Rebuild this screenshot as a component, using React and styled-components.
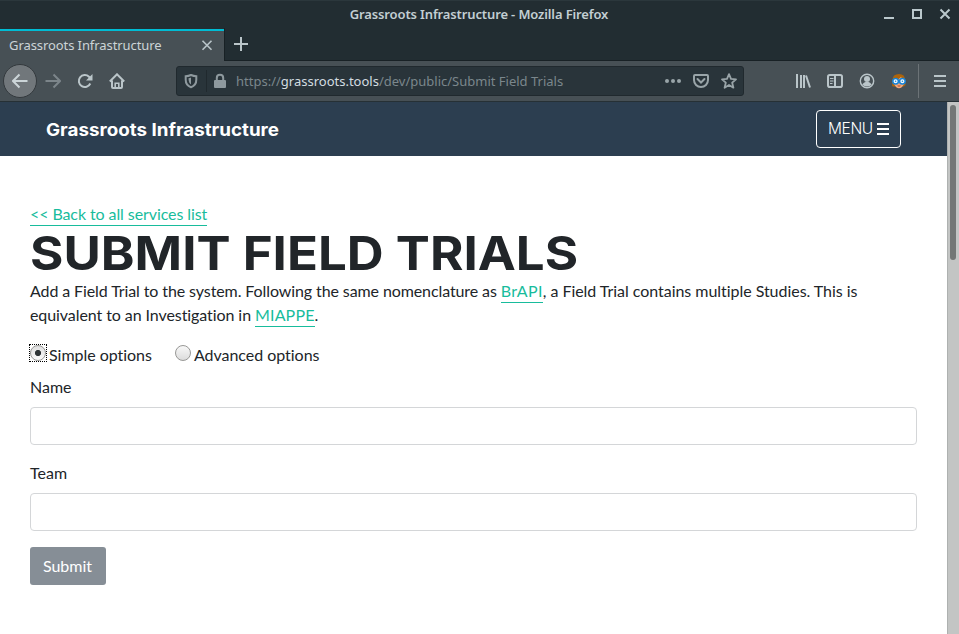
import React from "react";
import styled, { createGlobalStyle } from "styled-components";

const GlobalStyle = createGlobalStyle`
  * { box-sizing: border-box; }
  html, body { margin: 0; padding: 0; overflow: hidden; background: #fff; }
`;

const Window = styled.div`
  width: 959px;
  height: 634px;
  display: flex;
  flex-direction: column;
  overflow: hidden;
  font-family: Lato, sans-serif;
  color: #212529;
`;

const TitleBar = styled.header`
  height: 28px;
  flex: none;
  display: grid;
  grid-template-columns: 1fr auto 1fr;
  align-items: center;
  background: #222d32;
  border-top: 1px solid #2b373c;
  padding-right: 8px;
`;

const WindowTitle = styled.div`
  grid-column: 2;
  padding-left: 7px;
  font: 600 13px/27px "Noto Sans", sans-serif;
  letter-spacing: -0.13px;
  color: #c3cfd3;
  white-space: nowrap;
`;

const WindowButtons = styled.div`
  display: flex;
  justify-content: flex-end;
  gap: 16px;
  margin-top: -1px;
`;

const TabStrip = styled.div`
  height: 33px;
  flex: none;
  display: flex;
  background: #222d32;
`;

const Tab = styled.div`
  width: 224px;
  height: 32px;
  display: flex;
  align-items: center;
  justify-content: space-between;
  padding: 0 11px 0 9px;
  background: #475055;
  border-top: 2px solid #00bcd4;
  margin-top: 1px;
  font: 13px/26px "Noto Sans", sans-serif;
  color: #ccd4d7;
`;

const TabLabel = styled.span`
  height: 30px;
  line-height: 28px;
  letter-spacing: -0.08px;
  white-space: nowrap;
`;

const TabSpace = styled.div`
  flex: 1;
  display: flex;
  align-items: center;
  padding-left: 8px;
  border-left: 1px solid #182125;
  border-bottom: 1px solid #182125;
`;

const Toolbar = styled.nav`
  height: 41px;
  flex: none;
  display: flex;
  align-items: center;
  background: #475055;
  border-bottom: 1px solid #263035;
  padding-left: 3px;
`;

const BackButton = styled.div`
  width: 34px;
  height: 34px;
  flex: none;
  border-radius: 50%;
  background: #71777b;
  border: 1px solid #33393d;
  display: flex;
  align-items: center;
  justify-content: center;
`;

const NavIcons = styled.div`
  display: flex;
  gap: 16px;
  margin-left: 8px;
  width: 131px;
`;

const UrlBar = styled.div`
  width: 568px;
  height: 30px;
  flex: none;
  display: flex;
  align-items: center;
  padding: 0 6px;
  background: #29343a;
  border: 1px solid #20292e;
  border-radius: 3px;
`;

const UrlDivider = styled.span`
  width: 1px;
  height: 22px;
  margin: 0 5px 0 7px;
  background: #20292e;
`;

const Url = styled.span`
  flex: 1;
  margin-left: 8px;
  font: 13px/28px "Noto Sans", sans-serif;
  color: #7b878c;
  white-space: nowrap;
`;

const UrlHost = styled.span`
  color: #d3dde0;
`;

const UrlActions = styled.div`
  display: flex;
  gap: 12px;
`;

const ToolIcons = styled.div`
  display: flex;
  gap: 16px;
  margin-left: 51px;
`;

const MenuDivider = styled.span`
  width: 1px;
  height: 34px;
  margin: 0 13px 0 11px;
  background: #6c7377;
`;

const Viewport = styled.div`
  flex: 1;
  min-height: 0;
  display: flex;
`;

const Page = styled.main`
  flex: 1;
  background: #fff;
`;

const SiteHeader = styled.header`
  height: 54px;
  display: flex;
  align-items: center;
  justify-content: space-between;
  padding: 0 46px;
  background: #2c3e50;
`;

const Brand = styled.span`
  font: 700 17.5px/54px Inter, sans-serif;
  padding-top: 2px;
  transform: scaleX(1.074);
  transform-origin: left;
  color: #fff;
  white-space: nowrap;
`;

const MenuButton = styled.button`
  width: 85px;
  height: 38px;
  display: flex;
  align-items: center;
  gap: 3px;
  padding: 0 0 0 11px;
  border: 1px solid #fff;
  border-radius: 4px;
  background: transparent;
  color: #fff;
  font: 300 15.5px/36px Inter, sans-serif;
  letter-spacing: -0.4px;
`;

const Content = styled.section`
  padding: 46px 30px 0;
`;

const Line = styled.div`
  line-height: 24px;
  font-size: 16px;
  white-space: nowrap;
`;

const Run = styled.span`
  letter-spacing: ${(p) => p.$tracking};
`;

const Link = styled.a`
  padding-bottom: 2px;
  letter-spacing: ${(p) => p.$tracking};
  color: #18bc9c;
  border-bottom: 1px solid #18bc9c;
`;

const Heading = styled.h1`
  height: 53px;
  margin: 0;
  font: 700 46.5px/55px Inter, sans-serif;
  transform: scaleX(1.098);
  transform-origin: left;
  white-space: nowrap;
`;

const RadioRow = styled.div`
  height: 24px;
  margin-top: 16px;
  display: flex;
  gap: 23px;
  font-size: 16px;
  line-height: 24px;
  letter-spacing: -0.03px;
`;

const RadioLabel = styled.label`
  display: flex;
  gap: 2px;
  white-space: nowrap;
`;

const Radio = styled.span`
  width: 18px;
  height: 18px;
  margin: 1px 0 0 -1px;
  display: flex;
  align-items: center;
  justify-content: center;
  border: 1px dotted ${(p) => (p.$focused ? "#000" : "transparent")};
`;

const RadioDisc = styled.span`
  width: 16px;
  height: 16px;
  flex: none;
  border-radius: 50%;
  border: 1px solid #989896;
  background: ${(p) =>
    p.$checked
      ? "radial-gradient(circle, #2e3436 0 2.7px, transparent 3.5px), linear-gradient(#dedede, #fafafa)"
      : "linear-gradient(#f8f8f8, #dcdcdc)"};
`;

const Field = styled.div`
  display: flex;
  flex-direction: column;
  gap: 8px;
  margin: ${(p) => p.$top} 0 16px;
  font-size: 16px;
  line-height: 24px;
`;

const TextInput = styled.input`
  width: 887px;
  height: 38px;
  border: 1px solid #d4d6d8;
  border-radius: 4px;
  background: #fff;
  padding: 6px 12px;
`;

const SubmitButton = styled.button`
  width: 76px;
  height: 38px;
  padding: 0 1px 0 0;
  border: 0;
  border-radius: 3px;
  background: #868e96;
  color: #fff;
  font: 16px/38px Lato, sans-serif;
`;

const Scrollbar = styled.div`
  width: 12px;
  flex: none;
  padding: 3px 2px 0;
  background: #c3c5c4;
  border-left: 1px solid #aeb1b0;
`;

const Thumb = styled.div`
  width: 6px;
  height: 155px;
  border-radius: 3px;
  background: #737776;
`;

const Glyph = styled.svg`
  display: block;
  flex: none;
  fill: none;
  stroke: ${(p) => p.$color || "#bac5c9"};
  stroke-width: ${(p) => p.$weight || 2};
`;

const Icon = ({ size = 16, color, weight, children }) => (
  <Glyph width={size} height={size} viewBox="0 0 16 16" $color={color} $weight={weight}>
    {children}
  </Glyph>
);

const WindowIcon = ({ children }) => (
  <Glyph width="12" height="12" viewBox="0 0 12 12" $color="#bac8cc">{children}</Glyph>
);

export default function App() {
  return (
    <Window>
      <GlobalStyle />
      <TitleBar>
        <WindowTitle>Grassroots Infrastructure - Mozilla Firefox</WindowTitle>
        <WindowButtons>
          <WindowIcon><path d="M1 10h10" /></WindowIcon>
          <WindowIcon><path d="M2 2h8v8H2z" /></WindowIcon>
          <WindowIcon><path d="m1.5 1.5 9 9m0-9-9 9" /></WindowIcon>
        </WindowButtons>
      </TitleBar>
      <TabStrip>
        <Tab>
          <TabLabel>Grassroots Infrastructure</TabLabel>
          <Icon size={12} weight={2.2}><path d="m2 1 12 12m0-12L2 13" /></Icon>
        </Tab>
        <TabSpace>
          <Icon><path d="M8 1v14M1 8h14" /></Icon>
        </TabSpace>
      </TabStrip>
      <Toolbar>
        <BackButton>
          <Icon color="#ccd5d8"><path d="M15.500 8H1.500M7.500 1.500 1 8l6.500 6.500" /></Icon>
        </BackButton>
        <NavIcons>
          <Icon color="#7c858a"><path d="M.5 8h14M8.500 1.500 15 8l-6.500 6.500" /></Icon>
          <Icon>
            <path d="M13.300 10.500A6 6 0 1 1 12 3.700l1.500 1.600" />
            <path d="M15.500 1v6.500H9z" fill="#bac5c9" stroke="none" />
          </Icon>
          <Icon>
            <path d="M.8 8.500 8 1.300l7.200 7.200M3 7.500V14q0 1 1 1h8q1 0 1-1V7.500" />
            <path d="M6.200 15v-4.800h3.600V15" strokeWidth="1.600" />
          </Icon>
        </NavIcons>
        <UrlBar>
          <Icon color="#8e999e">
            <path d="M8 2Q5.400 3.100 2.700 3.200v3.600Q2.700 12.500 8 14.200q5.300-1.700 5.300-7.400V3.200Q10.600 3.100 8 2Z" />
            <path d="M8 4.500v7Q5.500 10 5.500 5.200 7 5.100 8 4.500Z" fill="#8e999e" stroke="none" />
          </Icon>
          <UrlDivider />
          <Icon color="#8e999e">
            <path d="M4.800 8V5q0-3.200 3.200-3.200T11.200 5v3" />
            <rect x="2" y="7" width="12" height="8" rx="1" fill="#8e999e" stroke="none" />
          </Icon>
          <Url>
            https://<UrlHost>grassroots.tools</UrlHost>/dev/public/Submit Field Trials
          </Url>
          <UrlActions>
            <Icon>
              <g fill="#99a4a8" stroke="none">
                <circle cx="2" cy="8" r="2" /><circle cx="8" cy="8" r="2" /><circle cx="14" cy="8" r="2" />
              </g>
            </Icon>
            <Icon color="#99a4a8">
              <path d="M2 2h12q1 0 1 1v4a7 7 0 0 1-14 0V3q0-1 1-1Z" />
              <path d="m4.500 6 3.500 3.500L11.500 6" strokeLinecap="round" />
            </Icon>
            <Icon color="#99a4a8" weight={1.8}>
              <path strokeLinejoin="round" d="m8 1.200 2 4.600 5 .5-3.800 3.400 1.200 5L8 12l-4.400 2.700 1.200-5L1 6.300l5-.5Z" />
            </Icon>
          </UrlActions>
        </UrlBar>
        <ToolIcons>
          <Icon><path d="M2 1v14M6 2v13M9 2v13M11 2.500l4 12" /></Icon>
          <Icon>
            <rect x="1" y="2" width="14" height="12" rx="1.800" />
            <path d="M8 2v12" />
            <path d="M3 5.500h3.500M3 8h3.500M3 10.500h2.500" strokeWidth="1" />
          </Icon>
          <Icon weight={1.4}>
            <circle cx="8" cy="8" r="6.700" />
            <g fill="#bac5c9" stroke="none">
              <circle cx="8" cy="6" r="3" /><path d="M3.200 11.500Q5 9 6.500 9h3q1.500 0 3.300 2.500Q11 13.500 8 13.500t-4.800-2Z" />
            </g>
          </Icon>
          <Icon weight={1.5}>
            <g stroke="none">
              <path fill="#ad640b" d="M1 13Q1.500 10 1.500 7 1.500 1 8 1q6 0 6 6 0 3.500.7 5l-2 1.500H2Z" />
              <path fill="#f5a778" d="M3 6.500Q8 6.800 10 4q1.500 2.500 3 2.500V11q-2 4.200-5 4.200T3 11Z" />
              <path fill="#a34b34" d="M6.300 12.600h3.400l-.7 1H7Z" />
            </g>
            <circle cx="4.600" cy="8.200" r="2.800" fill="#f4fafd" stroke="#1683d8" />
            <circle cx="11.400" cy="8.200" r="2.800" fill="#f4fafd" stroke="#1683d8" />
            <path d="M7.300 8h1.400" stroke="#1683d8" />
            <g fill="#2489d4" stroke="none"><circle cx="4.600" cy="8.200" r=".8" /><circle cx="11.400" cy="8.200" r=".8" /></g>
          </Icon>
        </ToolIcons>
        <MenuDivider />
        <Icon><path d="M2 3h12M2 8h12M2 13h12" /></Icon>
      </Toolbar>
      <Viewport>
        <Page>
          <SiteHeader>
            <Brand>Grassroots Infrastructure</Brand>
            <MenuButton>
              MENU
              <Glyph width="14" height="14" viewBox="0 0 14 14" $color="#fff">
                <path d="M1 2h12M1 7h12M1 12h12" />
              </Glyph>
            </MenuButton>
          </SiteHeader>
          <Content>
            <Line><Link $tracking="-0.09px">&lt;&lt; Back to all services list</Link></Line>
            <Heading>SUBMIT FIELD TRIALS</Heading>
            <Line>
              <Run $tracking="-0.1px">Add a Field Trial to the system. Following the same nomenclature as </Run>
              <Link $tracking="0.4px">BrAPI</Link>
              <Run $tracking="-0.04px">, a Field Trial contains multiple Studies. This is</Run>
            </Line>
            <Line>
              <Run $tracking="-0.08px">equivalent to an Investigation in </Run>
              <Link $tracking="0.15px">MIAPPE</Link>.
            </Line>
            <RadioRow>
              <RadioLabel>
                <Radio $focused><RadioDisc $checked /></Radio>
                Simple options
              </RadioLabel>
              <RadioLabel>
                <Radio><RadioDisc /></Radio>
                Advanced options
              </RadioLabel>
            </RadioRow>
            <Field $top="8px">
              <span>Name</span>
              <TextInput aria-label="Name" />
            </Field>
            <Field $top="0">
              <span>Team</span>
              <TextInput aria-label="Team" />
            </Field>
            <SubmitButton>Submit</SubmitButton>
          </Content>
        </Page>
        <Scrollbar><Thumb /></Scrollbar>
      </Viewport>
    </Window>
  );
}
